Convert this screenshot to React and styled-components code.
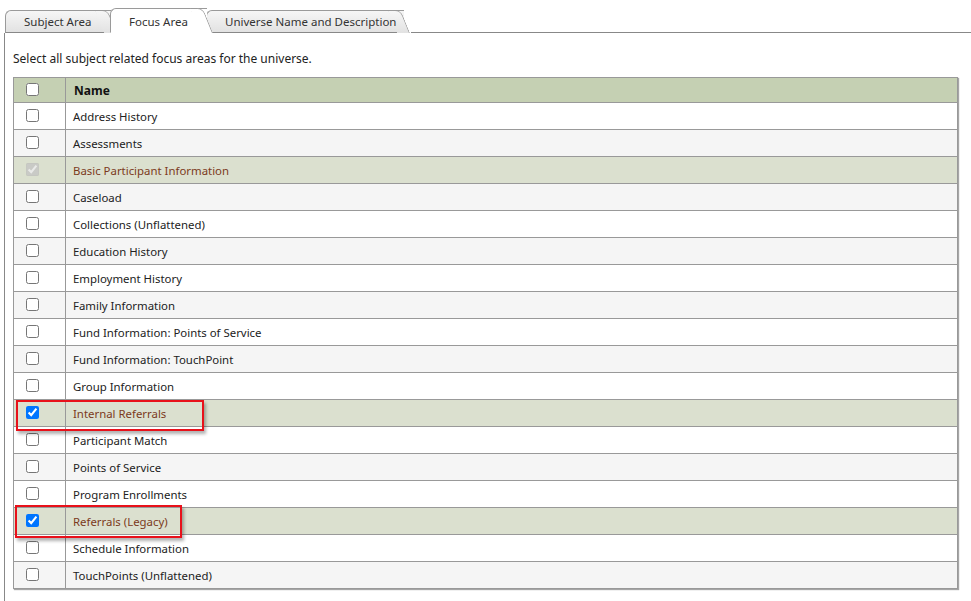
import React, { useState } from 'react';
import styled, { createGlobalStyle } from 'styled-components';

const GlobalStyle = createGlobalStyle`
  body {
    margin: 0;
    background: #fff;
    font-family: "Noto Sans", "Open Sans", Arial, sans-serif;
    font-size: 12px;
    color: #222;
  }
`;

const TABS = [
  { label: 'Subject Area', width: 106 },
  { label: 'Focus Area', width: 97 },
  { label: 'Universe Name and Description', width: 198 }
];

const AREAS = [
  { name: 'Address History' },
  { name: 'Assessments' },
  { name: 'Basic Participant Information', checked: true, locked: true },
  { name: 'Caseload' },
  { name: 'Collections (Unflattened)' },
  { name: 'Education History' },
  { name: 'Employment History' },
  { name: 'Family Information' },
  { name: 'Fund Information: Points of Service' },
  { name: 'Fund Information: TouchPoint' },
  { name: 'Group Information' },
  { name: 'Internal Referrals', checked: true, flag: { x: 2, y: 0, w: 188, h: 31 } },
  { name: 'Participant Match' },
  { name: 'Points of Service' },
  { name: 'Program Enrollments' },
  { name: 'Referrals (Legacy)', checked: true, flag: { x: 1, y: -3, w: 167, h: 33 } },
  { name: 'Schedule Information' },
  { name: 'TouchPoints (Unflattened)' }
];

const Focus = () => {
  const [active, setActive] = useState(1);
  const [rows, setRows] = useState(AREAS);

  const toggle = idx => {
    setRows(rows.map((r, i) => (i === idx && !r.locked ? { ...r, checked: !r.checked } : r)));
  };

  const allChecked = rows.every(r => r.checked);

  return (
    <Wrapper>
      <GlobalStyle />
      <TabStrip>
        {TABS.map((t, i) => (
          <Tab
            key={t.label}
            active={i === active}
            w={t.width}
            z={i === active ? 5 : 3 - i}
            onClick={() => setActive(i)}
          >
            <TabLabel>{t.label}</TabLabel>
          </Tab>
        ))}
        <TabLine />
      </TabStrip>
      <Panel>
        <Intro>Select all subject related focus areas for the universe.</Intro>
        <Grid>
          <thead>
            <tr>
              <CheckHead>
                <Box type="checkbox" checked={allChecked} readOnly />
              </CheckHead>
              <NameHead>Name</NameHead>
            </tr>
          </thead>
          <tbody>
            {rows.map((r, i) => (
              <Row key={r.name} odd={i % 2 === 1} selected={r.checked}>
                <CheckCell>
                  <Box
                    type="checkbox"
                    checked={!!r.checked}
                    disabled={r.locked}
                    onChange={() => toggle(i)}
                  />
                  {r.flag && <Flag x={r.flag.x} y={r.flag.y} w={r.flag.w} h={r.flag.h} />}
                </CheckCell>
                <NameCell selected={r.checked}>{r.name}</NameCell>
              </Row>
            ))}
          </tbody>
        </Grid>
      </Panel>
    </Wrapper>
  );
};

const Wrapper = styled.div`
  padding-top: 8px;
  width: 971px;
`;

const TabStrip = styled.div`
  display: flex;
  align-items: flex-end;
  height: 25px;
  padding-left: 5px;
`;

const Tab = styled.div`
  position: relative;
  z-index: ${p => p.z};
  width: ${p => p.w}px;
  height: ${p => (p.active ? 25 : 23)}px;
  box-sizing: border-box;
  padding-left: 18px;
  margin-right: -1px;
  line-height: ${p => (p.active ? 25 : 22)}px;
  font-size: 11.5px;
  color: #333;
  cursor: pointer;
  white-space: nowrap;
  border: 1px solid #9a9a9a;
  border-bottom: ${p => (p.active ? '1px solid #fff' : '1px solid #888')};
  border-right: none;
  border-top-left-radius: 6px;
  background: ${p => (p.active ? '#fff' : 'linear-gradient(#f6f6f6, #e2e2e2)')};

  /* slanted right side */
  &::after {
    content: '';
    position: absolute;
    top: -1px;
    right: -6px;
    bottom: -1px;
    width: 12px;
    border: 1px solid #9a9a9a;
    border-left: none;
    border-bottom: none;
    border-top-right-radius: 6px;
    background: ${p => (p.active ? '#fff' : 'linear-gradient(#f6f6f6, #e2e2e2)')};
    transform: skewX(22deg);
    transform-origin: bottom;
  }
`;

const TabLabel = styled.span`
  position: relative;
  z-index: 1;
`;

const TabLine = styled.div`
  flex: 1;
  height: 1px;
  margin-left: 8px;
  background: #888;
`;

const Panel = styled.div`
  margin-left: 4px;
  border-left: 1px solid #888;
  padding: 17px 12px 12px 8px;
  min-height: 560px;
`;

const Intro = styled.div`
  font-size: 12px;
  color: #222;
  margin-bottom: 9px;
  line-height: 18px;
`;

const Grid = styled.table`
  width: 945px;
  border-collapse: collapse;
  border: 1px solid #999;
  box-shadow: 1px 1px 1px rgba(0, 0, 0, 0.35);
`;

const CheckHead = styled.th`
  width: 52px;
  height: 25px;
  padding: 0 0 0 12px;
  box-sizing: border-box;
  text-align: left;
  background: #c5d0b3;
  border: 1px solid #999;
`;

const NameHead = styled.th`
  text-align: left;
  padding: 0 8px;
  font-size: 12px;
  font-weight: bold;
  color: #111;
  background: #c5d0b3;
  border: 1px solid #999;
`;

const Row = styled.tr`
  height: 27px;
  background: ${p => (p.selected ? '#dbe0cf' : p.odd ? '#f5f5f5' : '#fff')};
`;

const CheckCell = styled.td`
  position: relative;
  padding: 0 0 0 12px;
  text-align: left;
  border: 1px solid #999;
`;

const NameCell = styled.td`
  padding: 0 7px;
  font-size: 11.4px;
  color: ${p => (p.selected ? '#7b3a1c' : '#222')};
  border: 1px solid #999;
`;

const Box = styled.input`
  margin: 0;
  width: 13px;
  height: 13px;
  vertical-align: middle;
  position: relative;
  top: -2px;
`;

// red call-out frame drawn over a picked row
const Flag = styled.span`
  position: absolute;
  box-sizing: border-box;
  left: ${p => p.x}px;
  top: ${p => p.y}px;
  width: ${p => p.w}px;
  height: ${p => p.h}px;
  border: 2px solid #e8111a;
  box-shadow: 2px 3px 3px rgba(0, 0, 0, 0.3);
  pointer-events: none;
  z-index: 2;
`;

export default function App() {
  return <Focus />;
}
